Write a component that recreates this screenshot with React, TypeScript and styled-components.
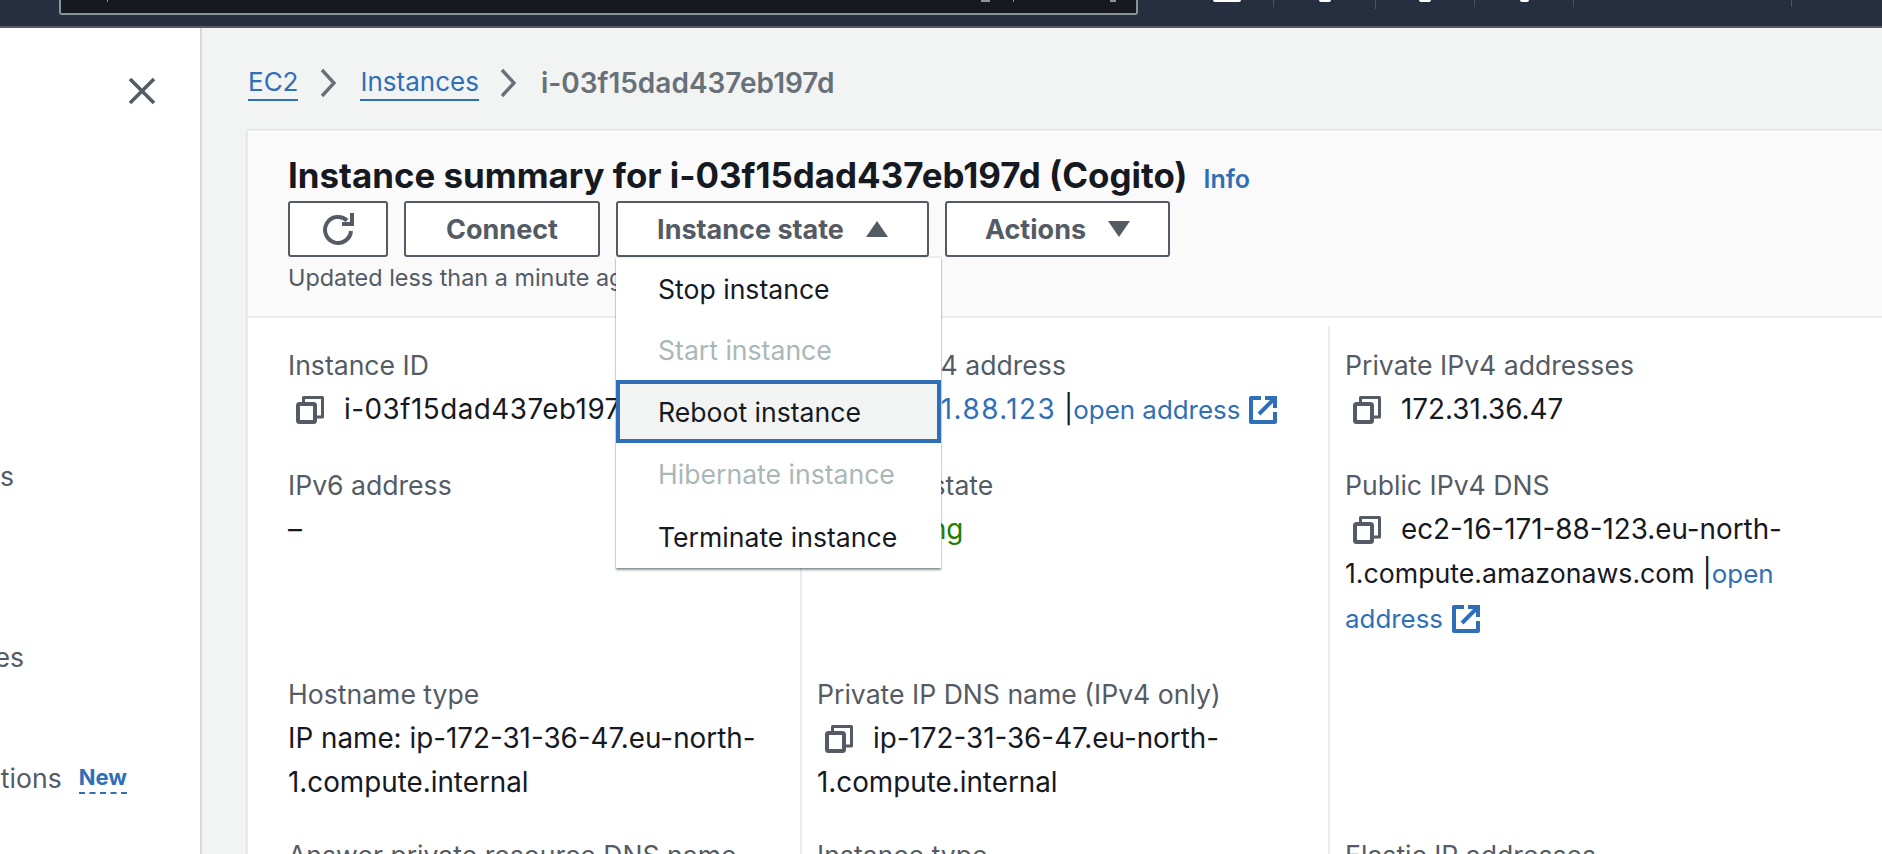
import React from "react";
import styled, { createGlobalStyle } from "styled-components";

const Global = createGlobalStyle`
  html, body { margin: 0; padding: 0; height: 100%; overflow: hidden; background: #f2f3f3; }
  body { font-family: "Inter", "Noto Sans", sans-serif; font-size: 26.6px; color: #16191f; }
  #root { height: 854px; }
`;

const Page = styled.div`
  width: 1882px; height: 854px; display: flex; flex-direction: column; overflow: hidden; position: relative;
`;
const TopBar = styled.header`
  flex: 0 0 28px; box-sizing: border-box; height: 28px; background: #252f3f;
  border-bottom: 2px solid #545b64; display: flex; align-items: flex-start;
`;
const Search = styled.div`
  width: 1079px; height: 15px; margin-left: 59px; box-sizing: border-box; background: #16191f;
  border: 2px solid #879596; border-top: 0; border-radius: 0 0 3px 3px; flex: none; display: flex; align-items: flex-start;
`;
const Speck = styled.span<{ $gap: number; $w: number }>`
  display: block; height: 2px; width: ${p => p.$w}px; margin-left: ${p => p.$gap}px; background: #879596;
`;
const BarCell = styled.div<{ $w: number; $h?: number; $pad?: number }>`
  width: ${p => p.$w}px; height: ${p => p.$h ?? 7}px; border-right: 1px solid #4a535f; flex: none; box-sizing: border-box;
  display: flex; justify-content: center; padding-left: ${p => p.$pad ?? 0}px;
`;
const IconStub = styled.span<{ $w: number }>`
  display: block; width: ${p => p.$w}px; height: 2px; background: #fff; border-radius: 0 0 6px 6px;
`;
const Body = styled.div` flex: 1; display: flex; min-height: 0; `;
const Side = styled.aside`
  flex: 0 0 202px; box-sizing: border-box; background: #fff; border-right: 2px solid #d5dbdb;
  overflow: hidden; color: #545b64; display: flex; flex-direction: column;
`;
const Close = styled.svg` margin: 48px 0 0 127px; flex: none; `;
const NavRow = styled.div<{ $end: number; $gap: number }>`
  flex: none; width: ${p => p.$end}px; margin-top: ${p => p.$gap}px; display: flex; justify-content: flex-end;
  white-space: nowrap; line-height: 32px;
`;
const NewBadge = styled.span`
  margin-left: 17px; color: #2f6fb7; font-weight: 700; font-size: 22px; border-bottom: 2px dashed #2f6fb7; line-height: 30px;
`;
const Main = styled.main` flex: 1; padding: 0 0 0 45px; min-width: 0; `;
const Crumbs = styled.nav`
  height: 102px; display: flex; align-items: center; gap: 20.5px; padding-top: 8px; box-sizing: border-box; font-size: 26px;
`;
const Crumb = styled.a`
  color: #2f6fb7; border-bottom: 2px solid #2f6fb7; line-height: 34px; margin-left: 1px;
`;
const Current = styled.span` color: #687078; font-weight: 600; font-size: 28px; margin-left: 1px; `;
const Card = styled.section`
  background: #fff; border-left: 1px solid #eaeded; border-top: 1px solid #eaeded; height: 725px;
  box-shadow: 0 0 2px rgba(0,28,36,.2);
`;
const CardHead = styled.div`
  box-sizing: border-box; height: 187px; background: #fafafa; border-bottom: 2px solid #eaeded; padding: 24px 0 0 40px;
`;
const TitleRow = styled.div` display: flex; align-items: baseline; gap: 16px; height: 40px; `;
const Title = styled.h1` margin: 0; font-size: 34.9px; font-weight: 700; line-height: 40px; color: #16191f; white-space: nowrap; `;
const Info = styled.a` color: #2f6fb7; font-size: 25px; font-weight: 600; `;
const Actions = styled.div` display: flex; gap: 16px; margin-top: 6px; `;
const Btn = styled.button<{ $w: number }>`
  width: ${p => p.$w}px; height: 56px; box-sizing: border-box; background: #fff; border: 2px solid #545b64;
  border-radius: 3px; font: 700 27px "Inter", sans-serif; color: #545b64; display: flex;
  align-items: center; justify-content: center; gap: 22px; padding: 0;
`;
const Updated = styled.div` font-size: 23.4px; color: #545b64; margin-top: 7px; line-height: 28px; white-space: nowrap; `;
const Grid = styled.div`
  display: grid; grid-template-columns: 552px 528px 1fr; grid-template-rows: 120px 209px 161px 100px; margin-top: 8px;
`;
const Cell = styled.div<{ $first?: boolean }>`
  box-sizing: border-box; padding: 17px 16px 0 ${p => p.$first ? 40 : 15}px;
  border-left: ${p => p.$first ? "none" : "2px solid #eaeded"};
`;
const Label = styled.div` color: #545b64; line-height: 44px; white-space: nowrap; `;
const Value = styled.div` line-height: 44px; color: #16191f; font-size: 27.8px; max-width: 480px; `;
const Tracked = styled.span<{ $track: number }>` letter-spacing: ${p => p.$track}px; `;
const Wordy = styled.span` font-size: 26.7px; `;
const CopyIcon = styled.svg` display: inline-block; vertical-align: -5px; margin: 0 20px 0 8px; `;
const Link = styled.a` color: #2f6fb7; font-size: 25.9px; `;
const IpLink = styled.a` color: #2f6fb7; letter-spacing: 1.5px; `;
const Ext = styled.svg` display: inline-block; vertical-align: -5px; margin-left: 9px; `;
const StatusIcon = styled.svg` display: inline-block; margin-right: 15px; vertical-align: -3px; `;
const Green = styled.span` color: #1d8102; `;
const Menu = styled.ul`
  position: absolute; left: 616px; top: 257px; width: 325px; height: 311px; margin: 0; padding: 0; list-style: none;
  background: #fff; border-top: 1px solid #eaeded; box-shadow: 0 2px 2px rgba(0,28,36,.45), 0 0 1px rgba(0,28,36,.3);
  box-sizing: border-box; display: flex; flex-direction: column;
`;
const Item = styled.li<{ $off?: boolean; $focus?: boolean; $h: number }>`
  height: ${p => p.$h}px; box-sizing: border-box; display: flex; align-items: center; padding-left: ${p => p.$focus ? 38 : 42}px;
  color: ${p => p.$off ? "#aab7b8" : "#16191f"}; background: ${p => p.$focus ? "#f2f3f3" : "#fff"};
  ${p => p.$focus ? "border: 4px solid #2f6fb7;" : ""}
`;

const Copy = () => (
  <CopyIcon width="28" height="28" viewBox="0 0 28 28" fill="none" stroke="#545b64">
    <path d="M7.5 6V1.5h19V21H21" strokeWidth="3" strokeLinejoin="round" />
    <rect x="2" y="8" width="17" height="18" rx="1.5" strokeWidth="4" />
  </CopyIcon>
);
const External = () => (
  <Ext width="28" height="28" viewBox="0 0 28 28" fill="none" stroke="#2f6fb7" strokeWidth="4">
    <path d="M12 2H2v24h24V16" strokeLinejoin="round" />
    <path d="M10 18 24 4M16 2h10v10" />
  </Ext>
);
const Caret = ({ up }: { up?: boolean }) => (
  <svg width="22" height="16" viewBox="0 0 22 16" fill="#545b64">
    <path d={up ? "M11 0 22 16H0Z" : "M11 16 22 0H0Z"} />
  </svg>
);
const Chevron = () => (
  <svg width="20" height="30" viewBox="0 0 20 30" fill="none" stroke="#687078" strokeWidth="3.4">
    <path d="m3 2 12 13L3 28" />
  </svg>
);
const Refresh = () => (
  <svg width="34" height="34" viewBox="0 0 34 34" fill="none" stroke="#545b64" strokeWidth="4">
    <path d="M26 8.5A13 13 0 1 0 30 19" />
    <path d="M29 1h4v13H21v-4h8z" fill="#545b64" stroke="none" />
  </svg>
);

export default function App() {
  return (
    <Page>
      <Global />
      <TopBar>
        <Search>
          <Speck $gap={46} $w={1} />
          <Speck $gap={873} $w={9} />
          <Speck $gap={23} $w={1} />
          <Speck $gap={96} $w={6} />
        </Search>
        <BarCell $w={136} $pad={42}><IconStub $w={28} /></BarCell>
        <BarCell $w={102} $h={9}><IconStub $w={12} /></BarCell>
        <BarCell $w={99}><IconStub $w={12} /></BarCell>
        <BarCell $w={99}><IconStub $w={9} /></BarCell>
        <BarCell $w={218} />
      </TopBar>
      <Body>
        <Side>
          <Close width="30" height="30" viewBox="0 0 30 30" fill="none" stroke="#545b64" strokeWidth="3.6">
            <path d="m3 3 24 24M27 3 3 27" />
          </Close>
          <NavRow $end={14} $gap={354}>Instances</NavRow>
          <NavRow $end={24} $gap={149}>Instances</NavRow>
          <NavRow $end={127} $gap={89}>Capacity Reservations<NewBadge>New</NewBadge></NavRow>
        </Side>
        <Main>
          <Crumbs>
            <Crumb>EC2</Crumb><Chevron /><Crumb>Instances</Crumb><Chevron /><Current>i-03f15dad437eb197d</Current>
          </Crumbs>
          <Card>
            <CardHead>
              <TitleRow>
                <Title>Instance summary for i-03f15dad437eb197d (Cogito)</Title>
                <Info>Info</Info>
              </TitleRow>
              <Actions>
                <Btn $w={100}><Refresh /></Btn>
                <Btn $w={196}>Connect</Btn>
                <Btn $w={313}>Instance state <Caret up /></Btn>
                <Btn $w={225}>Actions <Caret /></Btn>
              </Actions>
              <Updated>Updated less than a minute ago</Updated>
            </CardHead>
            <Grid>
              <Cell $first><Label>Instance ID</Label><Value><Copy /><Tracked $track={0.5}>i-03f15dad437eb197d</Tracked></Value></Cell>
              <Cell><Label>Public IPv4 address</Label><Value><Copy /><IpLink>16.171.88.123</IpLink> |<Link>open address</Link><External /></Value></Cell>
              <Cell><Label>Private IPv4 addresses</Label><Value><Copy />172.31.36.47</Value></Cell>
              <Cell $first><Label>IPv6 address</Label><Value>–</Value></Cell>
              <Cell>
                <Label>Instance state</Label>
                <Value>
                  <StatusIcon width="24" height="24" viewBox="0 0 24 24" fill="#1d8102"><circle cx="12" cy="12" r="12" /></StatusIcon>
                  <Green>Running</Green>
                </Value>
              </Cell>
              <Cell><Label>Public IPv4 DNS</Label><Value><Copy />ec2-16-171-88-123.eu-north-<Wordy>1.compute.amazonaws.com</Wordy> |<Link>open address</Link><External /></Value></Cell>
              <Cell $first><Label>Hostname type</Label><Value>IP name: ip-172-31-36-47.eu-north-1.compute.internal</Value></Cell>
              <Cell><Label>Private IP DNS name (IPv4 only)</Label><Value><Copy />ip-172-31-36-47.eu-north-1.compute.internal</Value></Cell>
              <Cell />
              <Cell $first><Label>Answer private resource DNS name</Label></Cell>
              <Cell><Label>Instance type</Label></Cell>
              <Cell><Label>Elastic IP addresses</Label></Cell>
            </Grid>
          </Card>
        </Main>
      </Body>
      <Menu>
        <Item $h={62}>Stop instance</Item>
        <Item $h={60} $off>Start instance</Item>
        <Item $h={64} $focus>Reboot instance</Item>
        <Item $h={62} $off>Hibernate instance</Item>
        <Item $h={63}>Terminate instance</Item>
      </Menu>
    </Page>
  );
}
